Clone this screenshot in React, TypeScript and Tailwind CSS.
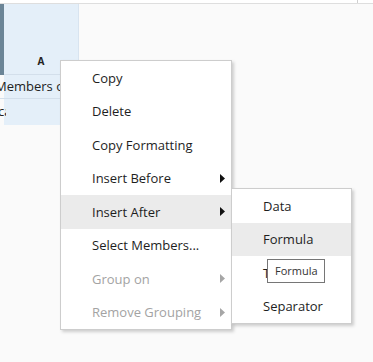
import React from "react";

type Item = { label: string; arrow?: boolean; disabled?: boolean; active?: boolean };

const menuItems: Item[] = [
  { label: "Copy" },
  { label: "Delete" },
  { label: "Copy Formatting" },
  { label: "Insert Before", arrow: true },
  { label: "Insert After", arrow: true, active: true },
  { label: "Select Members..." },
  { label: "Group on", arrow: true, disabled: true },
  { label: "Remove Grouping", arrow: true, disabled: true },
];

const subItems: Item[] = [
  { label: "Data" },
  { label: "Formula", active: true },
  { label: "Text" },
  { label: "Separator" },
];

const Arrow = ({ disabled }: { disabled?: boolean }) => (
  <svg width="5" height="9" viewBox="0 0 5 9" className="shrink-0">
    <polygon points="0,0 5,4.5 0,9" fill={disabled ? "#a6a6a6" : "#111111"} />
  </svg>
);

const MenuRow = ({ item }: { item: Item }) => (
  <div
    className={`h-[33.5px] flex items-center justify-between pl-[31px] pr-[6px] ${
      item.active ? "bg-[#ebebeb]" : ""
    } ${item.disabled ? "text-[#a3a3a3]" : "text-[#1e1e1e]"}`}
  >
    <span className="pt-[1px]">{item.label}</span>
    {item.arrow && <Arrow disabled={item.disabled} />}
  </div>
);

const App: React.FC = () => {
  return (
    <div
      className="relative w-[373px] h-[362px] overflow-hidden bg-[#fafafa]"
      style={{ fontFamily: '"Open Sans", "Noto Sans", sans-serif' }}
    >
      {/* top strip */}
      <div className="h-[4px] bg-white border-b border-[#dedede] flex justify-end">
        <div className="w-px h-full bg-[#d0d0d0] mr-[15px]" />
      </div>

      {/* grid */}
      <div className="flex">
        <div className="w-[4px] h-[71px] bg-[#6b8597]" />
        <div className="w-[75px] bg-[#e4eff9] border-r border-[#d8e4f0]">
          <div className="h-[71px] flex items-end justify-center pb-[5px] border-b border-[#d3dfeb]">
            <span className="text-[10px] font-bold text-[#222]">A</span>
          </div>
          <div className="h-[24px] flex items-center overflow-hidden border-b border-[#d3dfeb] -ml-[4px]">
            <span className="text-[13px] text-[#222] whitespace-nowrap -ml-[5px]">Members of</span>
          </div>
          <div className="h-[26px] flex items-center -ml-[4px]">
            <div className="w-[6px] overflow-hidden">
              <span className="block text-[13px] text-[#222] whitespace-nowrap -ml-[2px]">ca</span>
            </div>
          </div>
        </div>
      </div>

      {/* context menu */}
      <div className="absolute left-[60px] top-[60px] w-[172px] bg-white border border-[#cdcdcd] shadow-[2px_2px_3px_rgba(0,0,0,0.18)] text-[13px]">
        {menuItems.map((item) => (
          <MenuRow key={item.label} item={item} />
        ))}
      </div>

      {/* submenu */}
      <div className="absolute left-[231px] top-[188px] w-[121px] bg-white border border-[#cdcdcd] shadow-[2px_2px_3px_rgba(0,0,0,0.18)] text-[13px]">
        {subItems.map((item) => (
          <MenuRow key={item.label} item={item} />
        ))}
      </div>

      {/* tooltip */}
      <div className="absolute left-[267px] top-[259px] w-[58px] h-[24px] bg-white border border-[#767676] flex items-center pl-[7px] text-[11px] text-[#333]">
        Formula
      </div>
    </div>
  );
};

export default App;
